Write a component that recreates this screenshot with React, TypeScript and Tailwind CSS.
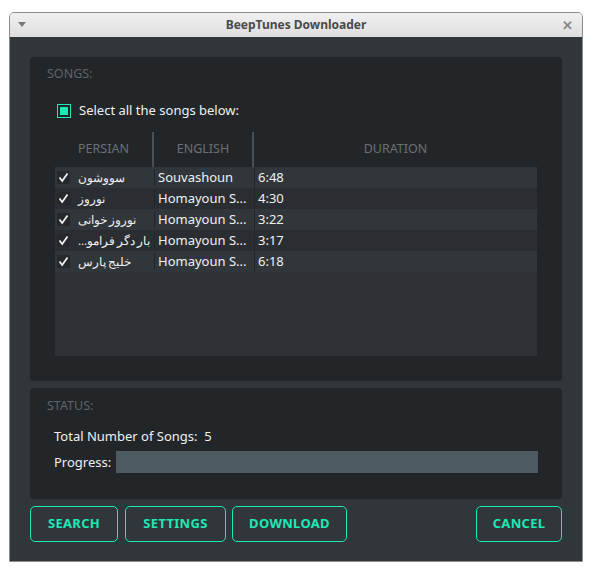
import React from "react";

type Song = { fa: string; en: string; duration: string };

const songs: Song[] = [
    { fa: "سووشون", en: "Souvashoun", duration: "6:48" },
    { fa: "نوروز", en: "Homayoun S...", duration: "4:30" },
    { fa: "نوروز خوانی", en: "Homayoun S...", duration: "3:22" },
    { fa: "بار دگر فرامو…", en: "Homayoun S...", duration: "3:17" },
    { fa: "خلیج پارس", en: "Homayoun S...", duration: "6:18" },
];

function Check() {
    return (
        <span className="flex h-[13px] w-[13px] shrink-0 items-center justify-center bg-[#25292c]">
            <svg width="11" height="11" viewBox="0 0 11 11">
                <polyline points="1.5,5.5 4.2,9 9.5,1.5" fill="none" stroke="#f0f0f0" strokeWidth="1.8" />
            </svg>
        </span>
    );
}

function Button({ label, w }: { label: string; w: string }) {
    return (
        <button className={"h-[36px] rounded-[5px] border border-[#1de9b6] text-[13px] font-bold tracking-[0.3px] text-[#1de9b6] " + w}>
            {label}
        </button>
    );
}

export default function App() {
    return (
        <div className="min-h-screen w-full bg-white pt-[12px] pl-[9px]" style={{ fontFamily: '"Noto Sans", "Open Sans", sans-serif' }}>
            <div className="flex h-[550px] w-[574px] flex-col overflow-hidden rounded-t-[5px] border border-[#8a8a8a]">
                {/* TITLEBAR */}
                <div className="relative flex h-[24px] shrink-0 items-center justify-center bg-gradient-to-b from-[#f0f0f0] to-[#dedede]">
                    <span className="absolute left-[8px] top-[9px] h-0 w-0 border-x-[4px] border-t-[5px] border-x-transparent border-t-[#777]"></span>
                    <span className="text-[12px] font-bold text-[#4a4a4a]">BeepTunes Downloader</span>
                    <span className="absolute right-[9px] top-[3px] text-[13px] font-bold text-[#888]">✕</span>
                </div>

                {/* BODY */}
                <div className="flex flex-1 flex-col bg-[#31363b] px-[20px] pt-[20px] text-[#eff0f1]">
                    {/* SONGS */}
                    <div className="flex h-[324px] flex-col rounded-[4px] bg-[#232629] px-[25px]">
                        <div className="-ml-[8px] mt-[8px] text-[12.5px] text-[#5f6468]">SONGS:</div>
                        <div className="mt-[17px] ml-[2px] flex items-center gap-[8px] text-[13px]">
                            <span className="flex h-[14px] w-[14px] items-center justify-center border border-[#1de9b6]">
                                <span className="h-[8px] w-[8px] bg-[#1de9b6]"></span>
                            </span>
                            <span>Select all the songs below:</span>
                        </div>

                        <div className="mt-[12px] flex h-[224px] flex-col bg-[#2a2e32]">
                            <div className="flex h-[35px] shrink-0 bg-[#232629] text-[12.5px] text-[#6b7074]">
                                <div className="flex w-[99px] items-center justify-center border-r-2 border-[#4b5055]">PERSIAN</div>
                                <div className="flex w-[100px] items-center justify-center border-r-2 border-[#4b5055]">ENGLISH</div>
                                <div className="flex flex-1 items-center justify-center">DURATION</div>
                            </div>
                            {songs.map((s, i) => (
                                <div key={i} className={"flex h-[21px] items-center text-[13px] " + (i % 2 === 0 ? "bg-[#31363b]" : "bg-[#2a2e32]")}>
                                    <div className="flex w-[100px] items-center overflow-hidden whitespace-nowrap border-r border-[#232629] pl-[2px]">
                                        <Check />
                                        <span dir="rtl" className="ml-[8px] whitespace-nowrap text-[11.5px] [word-spacing:-1px]">{s.fa}</span>
                                    </div>
                                    <div className="w-[100px] whitespace-nowrap border-r border-[#232629] pl-[3px]">{s.en}</div>
                                    <div className="flex-1 pl-[3px]">{s.duration}</div>
                                </div>
                            ))}
                            <div className="flex-1 bg-[#2e3236]"></div>
                        </div>
                    </div>

                    {/* STATUS */}
                    <div className="mt-[7px] flex h-[111px] flex-col rounded-[4px] bg-[#232629] px-[24px] text-[13px]">
                        <div className="-ml-[7px] mt-[9px] text-[12.5px] text-[#5f6468]">STATUS:</div>
                        <div className="mt-[11px]">Total Number of Songs:&nbsp; 5</div>
                        <div className="mt-[5px] flex items-center gap-[5px]">
                            <span>Progress:</span>
                            <div className="h-[22px] flex-1 bg-[#4e5a61]"></div>
                        </div>
                    </div>

                    {/* BUTTONS */}
                    <div className="mt-[7px] flex">
                        <Button label="SEARCH" w="w-[88px]" />
                        <Button label="SETTINGS" w="ml-[7px] w-[101px]" />
                        <Button label="DOWNLOAD" w="ml-[6px] w-[115px]" />
                        <div className="flex-1"></div>
                        <Button label="CANCEL" w="w-[86px]" />
                    </div>
                </div>
            </div>
        </div>
    );
}
